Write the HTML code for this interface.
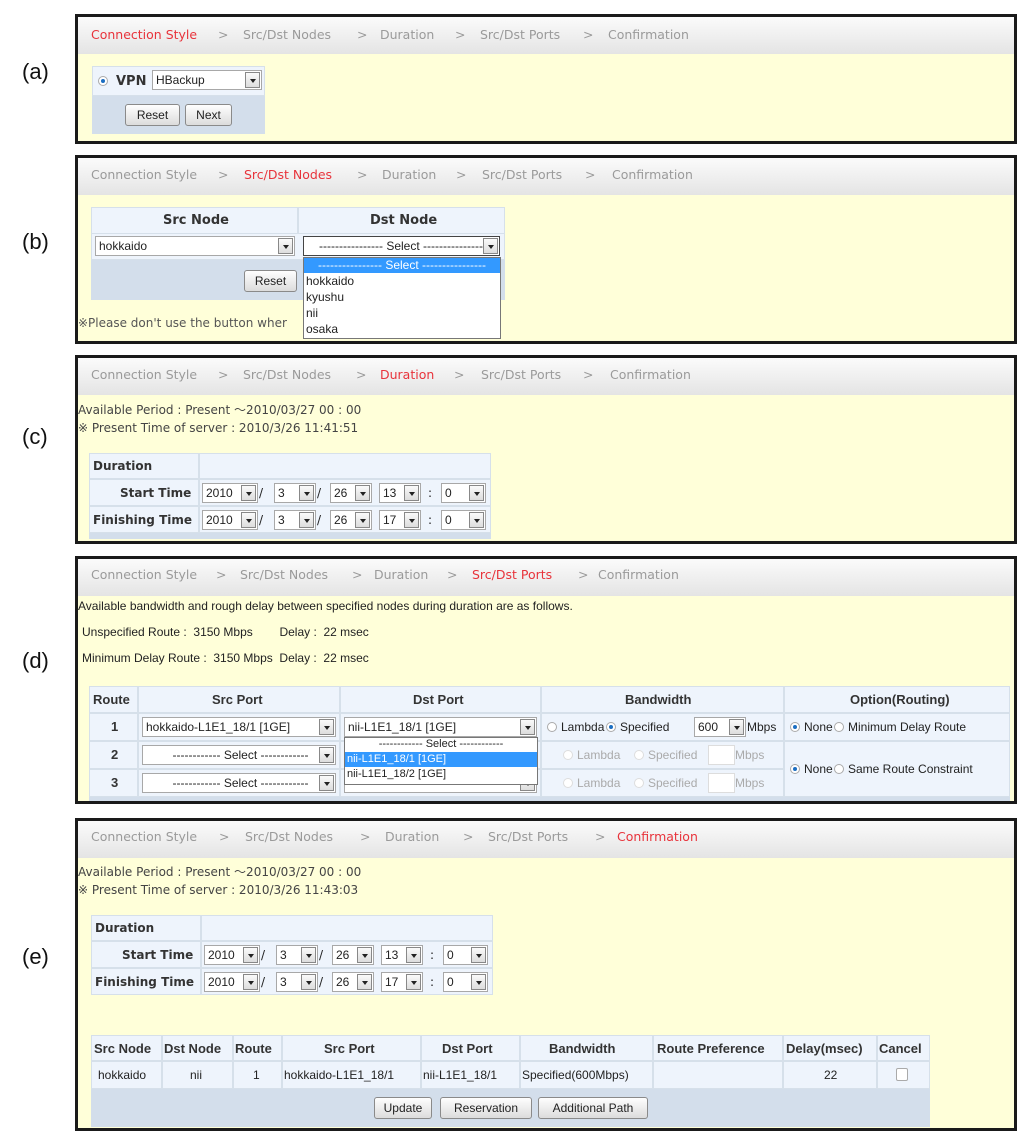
<!DOCTYPE html><html><head><meta charset="utf-8"><style>
*{margin:0;padding:0;box-sizing:border-box}
body{width:1024px;height:1137px;background:#fff;position:relative;font-family:"DejaVu Sans",Verdana,sans-serif;font-size:12px;color:#222;overflow:hidden}
div,span{position:absolute;white-space:nowrap}
.p{border:3px solid #1a1a1a;background:#ffffd9}
.hd{left:0;right:0;top:0;height:37px;background:linear-gradient(#fbfbfb,#e4e4e4)}
.h{color:#9a9a9a;font-size:12.5px}
.r{color:#e8333b}
.lab{font-family:"Liberation Sans",Arial,sans-serif;font-size:22px;color:#111}
.c{background:#eef4fc;border:1px solid #d6e0ea}
.b{background:#d3deeb}
.s{background:#fff;border:1px solid #a8a8a8;height:20px;line-height:18px;padding-left:3px;font-family:"Liberation Sans",Arial,sans-serif;font-size:12px}
.s i{position:absolute;right:1px;top:1px;width:15px;height:16px;border:1px solid #888;background:linear-gradient(#fafafa,#ddd)}
.s i:after{content:"";position:absolute;left:4px;top:6px;border:3px solid transparent;border-top:4px solid #222}
.bt{border:1px solid #8a8a8a;border-radius:3px;background:linear-gradient(#fefefe,#dcdcdc);text-align:center;font-family:"Liberation Sans",Arial,sans-serif;font-size:12px;line-height:20px;height:22px}
.rd{width:10px;height:10px;border-radius:50%;border:1px solid #aaa;background:#fff}
.rd.on:after{content:"";position:absolute;left:2px;top:2px;width:4px;height:4px;border-radius:50%;background:#1b6ec2}
.n{font-family:"Liberation Sans",Arial,sans-serif;font-size:12px}
.bd{font-weight:bold;color:#333}
.g{color:#aaa}
.hl{background:#3399ff;color:#fff}
</style></head><body>
<div class="lab" style="left:22px;top:59px">(a)</div>
<div class="lab" style="left:22px;top:229px">(b)</div>
<div class="lab" style="left:22px;top:424px">(c)</div>
<div class="lab" style="left:22px;top:648px">(d)</div>
<div class="lab" style="left:22px;top:944px">(e)</div>

<!-- a -->
<div class="p" style="left:75px;top:14px;width:942px;height:130px"><div class="hd"></div></div>
<span class="h r" style="left:91px;top:27px">Connection Style</span><span class="h" style="left:218px;top:27px">&gt;</span><span class="h" style="left:243px;top:27px">Src/Dst Nodes</span><span class="h" style="left:357px;top:27px">&gt;</span><span class="h" style="left:380px;top:27px">Duration</span><span class="h" style="left:455px;top:27px">&gt;</span><span class="h" style="left:480px;top:27px">Src/Dst Ports</span><span class="h" style="left:583px;top:27px">&gt;</span><span class="h" style="left:608px;top:27px">Confirmation</span>
<div class="c" style="left:92px;top:66px;width:173px;height:30px"></div>
<div class="b" style="left:92px;top:96px;width:173px;height:38px"></div>
<div class="rd on" style="left:98px;top:76px"></div>
<span class="bd" style="left:116px;top:74px;font-size:13px">VPN</span>
<div class="s" style="left:152px;top:70px;width:110px">HBackup<i></i></div>
<div class="bt" style="left:125px;top:104px;width:55px">Reset</div>
<div class="bt" style="left:185px;top:104px;width:47px">Next</div>

<!-- b -->
<div class="p" style="left:75px;top:155px;width:942px;height:189px"><div class="hd"></div></div>
<span class="h" style="left:91px;top:167px">Connection Style</span><span class="h" style="left:218px;top:167px">&gt;</span><span class="h r" style="left:244px;top:167px">Src/Dst Nodes</span><span class="h" style="left:357px;top:167px">&gt;</span><span class="h" style="left:382px;top:167px">Duration</span><span class="h" style="left:456px;top:167px">&gt;</span><span class="h" style="left:482px;top:167px">Src/Dst Ports</span><span class="h" style="left:585px;top:167px">&gt;</span><span class="h" style="left:612px;top:167px">Confirmation</span>
<div class="c" style="left:91px;top:207px;width:207px;height:27px"></div>
<div class="c" style="left:298px;top:207px;width:207px;height:27px"></div>
<div class="c" style="left:91px;top:233px;width:414px;height:27px"></div>
<div class="b" style="left:91px;top:260px;width:414px;height:40px"></div>
<span class="bd" style="left:163px;top:213px;font-size:13px">Src Node</span>
<span class="bd" style="left:370px;top:213px;font-size:13px">Dst Node</span>
<div class="s" style="left:95px;top:236px;width:200px">hokkaido<i></i></div>
<div class="s" style="left:303px;top:236px;width:197px;text-align:center;border-color:#444">---------------- Select ----------------<i></i></div>
<div class="bt" style="left:244px;top:270px;width:53px">Reset</div>
<span style="left:78px;top:316px;color:#555">※Please don't use the button wher</span>
<div style="left:303px;top:257px;width:198px;height:82px;background:#fff;border:1px solid #777"></div>
<div class="n hl" style="left:304px;top:258px;width:196px;height:15px;line-height:15px;text-align:center">---------------- Select ----------------</div>
<span class="n" style="left:306px;top:274px">hokkaido</span>
<span class="n" style="left:306px;top:290px">kyushu</span>
<span class="n" style="left:306px;top:306px">nii</span>
<span class="n" style="left:306px;top:322px">osaka</span>

<!-- c -->
<div class="p" style="left:75px;top:355px;width:942px;height:189px"><div class="hd"></div></div>
<span class="h" style="left:91px;top:367px">Connection Style</span><span class="h" style="left:218px;top:367px">&gt;</span><span class="h" style="left:243px;top:367px">Src/Dst Nodes</span><span class="h" style="left:356px;top:367px">&gt;</span><span class="h r" style="left:380px;top:367px">Duration</span><span class="h" style="left:454px;top:367px">&gt;</span><span class="h" style="left:481px;top:367px">Src/Dst Ports</span><span class="h" style="left:583px;top:367px">&gt;</span><span class="h" style="left:610px;top:367px">Confirmation</span>
<span style="left:78px;top:401px;color:#444">Available Period : Present ～2010/03/27 00 : 00</span>
<span style="left:78px;top:421px;color:#444">※ Present Time of server : 2010/3/26 11:41:51</span>

<!-- e -->
<div class="p" style="left:75px;top:818px;width:942px;height:313px"><div class="hd"></div></div>
<span class="h" style="left:91px;top:829px">Connection Style</span><span class="h" style="left:219px;top:829px">&gt;</span><span class="h" style="left:245px;top:829px">Src/Dst Nodes</span><span class="h" style="left:360px;top:829px">&gt;</span><span class="h" style="left:385px;top:829px">Duration</span><span class="h" style="left:463px;top:829px">&gt;</span><span class="h" style="left:488px;top:829px">Src/Dst Ports</span><span class="h" style="left:595px;top:829px">&gt;</span><span class="h r" style="left:617px;top:829px">Confirmation</span>
<span style="left:78px;top:863px;color:#444">Available Period : Present ～2010/03/27 00 : 00</span>
<span style="left:78px;top:883px;color:#444">※ Present Time of server : 2010/3/26 11:43:03</span>

<!-- duration tables c and e -->
<div id="dc" style="left:89px;top:453px;width:402px;height:86px">
 <div class="c" style="left:0;top:0;width:110px;height:26px"></div><div class="c" style="left:110px;top:0;width:292px;height:26px"></div>
 <div class="c" style="left:0;top:26px;width:110px;height:27px"></div><div class="c" style="left:110px;top:26px;width:292px;height:27px"></div>
 <div class="c" style="left:0;top:53px;width:110px;height:27px"></div><div class="c" style="left:110px;top:53px;width:292px;height:27px"></div>
 <div class="b" style="left:0;top:80px;width:402px;height:6px"></div>
 <span class="bd" style="left:4px;top:6px">Duration</span>
 <span class="bd" style="left:31px;top:33px">Start Time</span>
 <span class="bd" style="left:4px;top:60px">Finishing Time</span>
 <div class="s" style="left:113px;top:30px;width:56px">2010<i></i></div><span style="left:170px;top:33px">/</span>
 <div class="s" style="left:185px;top:30px;width:42px">3<i></i></div><span style="left:228px;top:33px">/</span>
 <div class="s" style="left:241px;top:30px;width:42px">26<i></i></div>
 <div class="s" style="left:290px;top:30px;width:42px">13<i></i></div><span style="left:339px;top:33px">:</span>
 <div class="s" style="left:352px;top:30px;width:45px">0<i></i></div>
 <div class="s" style="left:113px;top:57px;width:56px">2010<i></i></div><span style="left:170px;top:60px">/</span>
 <div class="s" style="left:185px;top:57px;width:42px">3<i></i></div><span style="left:228px;top:60px">/</span>
 <div class="s" style="left:241px;top:57px;width:42px">26<i></i></div>
 <div class="s" style="left:290px;top:57px;width:42px">17<i></i></div><span style="left:339px;top:60px">:</span>
 <div class="s" style="left:352px;top:57px;width:45px">0<i></i></div>
</div>
<div style="left:91px;top:915px;width:402px;height:86px">
 <div class="c" style="left:0;top:0;width:110px;height:26px"></div><div class="c" style="left:110px;top:0;width:292px;height:26px"></div>
 <div class="c" style="left:0;top:26px;width:110px;height:27px"></div><div class="c" style="left:110px;top:26px;width:292px;height:27px"></div>
 <div class="c" style="left:0;top:53px;width:110px;height:27px"></div><div class="c" style="left:110px;top:53px;width:292px;height:27px"></div>
 <span class="bd" style="left:4px;top:6px">Duration</span>
 <span class="bd" style="left:31px;top:33px">Start Time</span>
 <span class="bd" style="left:4px;top:60px">Finishing Time</span>
 <div class="s" style="left:113px;top:30px;width:56px">2010<i></i></div><span style="left:170px;top:33px">/</span>
 <div class="s" style="left:185px;top:30px;width:42px">3<i></i></div><span style="left:228px;top:33px">/</span>
 <div class="s" style="left:241px;top:30px;width:42px">26<i></i></div>
 <div class="s" style="left:290px;top:30px;width:42px">13<i></i></div><span style="left:339px;top:33px">:</span>
 <div class="s" style="left:352px;top:30px;width:45px">0<i></i></div>
 <div class="s" style="left:113px;top:57px;width:56px">2010<i></i></div><span style="left:170px;top:60px">/</span>
 <div class="s" style="left:185px;top:57px;width:42px">3<i></i></div><span style="left:228px;top:60px">/</span>
 <div class="s" style="left:241px;top:57px;width:42px">26<i></i></div>
 <div class="s" style="left:290px;top:57px;width:42px">17<i></i></div><span style="left:339px;top:60px">:</span>
 <div class="s" style="left:352px;top:57px;width:45px">0<i></i></div>
</div>

<!-- d -->
<div class="p" style="left:75px;top:556px;width:942px;height:248px"><div class="hd"></div></div>
<span class="h" style="left:91px;top:567px">Connection Style</span><span class="h" style="left:216px;top:567px">&gt;</span><span class="h" style="left:240px;top:567px">Src/Dst Nodes</span><span class="h" style="left:352px;top:567px">&gt;</span><span class="h" style="left:374px;top:567px">Duration</span><span class="h" style="left:447px;top:567px">&gt;</span><span class="h r" style="left:472px;top:567px">Src/Dst Ports</span><span class="h" style="left:578px;top:567px">&gt;</span><span class="h" style="left:598px;top:567px">Confirmation</span>
<span class="n" style="left:78px;top:599px">Available bandwidth and rough delay between specified nodes during duration are as follows.</span>
<span class="n" style="left:82px;top:625px">Unspecified Route :&nbsp; 3150 Mbps&nbsp;&nbsp;&nbsp;&nbsp;&nbsp;&nbsp;&nbsp; Delay :&nbsp; 22 msec</span>
<span class="n" style="left:82px;top:651px">Minimum Delay Route :&nbsp; 3150 Mbps&nbsp; Delay :&nbsp; 22 msec</span>
<div class="c" style="left:89px;top:686px;width:49px;height:27px"></div>
<div class="c" style="left:138px;top:686px;width:202px;height:27px"></div>
<div class="c" style="left:340px;top:686px;width:201px;height:27px"></div>
<div class="c" style="left:541px;top:686px;width:243px;height:27px"></div>
<div class="c" style="left:784px;top:686px;width:226px;height:27px"></div>
<div class="c" style="left:89px;top:713px;width:49px;height:28px"></div><div class="c" style="left:138px;top:713px;width:202px;height:28px"></div><div class="c" style="left:340px;top:713px;width:201px;height:28px"></div><div class="c" style="left:541px;top:713px;width:243px;height:28px"></div><div class="c" style="left:784px;top:713px;width:226px;height:28px"></div>
<div class="c" style="left:89px;top:741px;width:49px;height:28px"></div><div class="c" style="left:138px;top:741px;width:202px;height:28px"></div><div class="c" style="left:340px;top:741px;width:201px;height:28px"></div><div class="c" style="left:541px;top:741px;width:243px;height:28px"></div><div class="c" style="left:784px;top:741px;width:226px;height:56px"></div>
<div class="c" style="left:89px;top:769px;width:49px;height:28px"></div><div class="c" style="left:138px;top:769px;width:202px;height:28px"></div><div class="c" style="left:340px;top:769px;width:201px;height:28px"></div><div class="c" style="left:541px;top:769px;width:243px;height:28px"></div>
<div class="b" style="left:89px;top:797px;width:921px;height:4px"></div>
<span class="n bd" style="left:93px;top:692px;font-size:13px">Route</span>
<span class="n bd" style="left:212px;top:692px;font-size:13px">Src Port</span>
<span class="n bd" style="left:413px;top:692px;font-size:13px">Dst Port</span>
<span class="n bd" style="left:625px;top:692px;font-size:13px">Bandwidth</span>
<span class="n bd" style="left:850px;top:692px;font-size:13px">Option(Routing)</span>
<span class="n bd" style="left:111px;top:719px;font-size:13px">1</span>
<span class="n bd" style="left:111px;top:747px;font-size:13px">2</span>
<span class="n bd" style="left:111px;top:775px;font-size:13px">3</span>
<div class="s" style="left:142px;top:717px;width:194px">hokkaido-L1E1_18/1 [1GE]<i></i></div>
<div class="s" style="left:142px;top:745px;width:194px;text-align:center">------------ Select ------------<i></i></div>
<div class="s" style="left:142px;top:773px;width:194px;text-align:center">------------ Select ------------<i></i></div>
<div class="s" style="left:344px;top:717px;width:193px">nii-L1E1_18/1 [1GE]<i></i></div>
<div class="s" style="left:344px;top:773px;width:193px"><i></i></div>
<div style="left:344px;top:737px;width:194px;height:48px;background:#fff;border:1px solid #777"></div>
<div class="n" style="left:345px;top:738px;width:192px;text-align:center;font-size:11px">------------ Select ------------</div>
<div class="n hl" style="left:345px;top:752px;width:192px;height:15px;line-height:15px;padding-left:2px;font-size:11px">nii-L1E1_18/1 [1GE]</div>
<div class="n" style="left:347px;top:768px;font-size:11px">nii-L1E1_18/2 [1GE]</div>
<div class="rd" style="left:547px;top:722px"></div><span class="n" style="left:561px;top:720px">Lambda</span>
<div class="rd on" style="left:606px;top:722px"></div><span class="n" style="left:620px;top:720px">Specified</span>
<div class="s" style="left:694px;top:717px;width:52px">600<i></i></div><span class="n" style="left:747px;top:720px">Mbps</span>
<div class="rd g" style="left:563px;top:750px;border-color:#ddd"></div><span class="n g" style="left:577px;top:748px">Lambda</span>
<div class="rd" style="left:634px;top:750px;border-color:#ddd"></div><span class="n g" style="left:648px;top:748px">Specified</span>
<div class="s" style="left:708px;top:745px;width:27px;border-color:#ddd"></div><span class="n g" style="left:735px;top:748px">Mbps</span>
<div class="rd" style="left:563px;top:778px;border-color:#ddd"></div><span class="n g" style="left:577px;top:776px">Lambda</span>
<div class="rd" style="left:634px;top:778px;border-color:#ddd"></div><span class="n g" style="left:648px;top:776px">Specified</span>
<div class="s" style="left:708px;top:773px;width:27px;border-color:#ddd"></div><span class="n g" style="left:735px;top:776px">Mbps</span>
<div class="rd on" style="left:790px;top:722px"></div><span class="n" style="left:804px;top:720px">None</span>
<div class="rd" style="left:834px;top:722px"></div><span class="n" style="left:848px;top:720px">Minimum Delay Route</span>
<div class="rd on" style="left:790px;top:764px"></div><span class="n" style="left:804px;top:762px">None</span>
<div class="rd" style="left:834px;top:764px"></div><span class="n" style="left:848px;top:762px">Same Route Constraint</span>

<!-- e bottom table -->
<div class="c" style="left:91px;top:1035px;width:71px;height:26px"></div><div class="c" style="left:162px;top:1035px;width:71px;height:26px"></div><div class="c" style="left:233px;top:1035px;width:49px;height:26px"></div><div class="c" style="left:282px;top:1035px;width:139px;height:26px"></div><div class="c" style="left:421px;top:1035px;width:99px;height:26px"></div><div class="c" style="left:520px;top:1035px;width:133px;height:26px"></div><div class="c" style="left:653px;top:1035px;width:130px;height:26px"></div><div class="c" style="left:783px;top:1035px;width:94px;height:26px"></div><div class="c" style="left:877px;top:1035px;width:53px;height:26px"></div>
<div class="c" style="left:91px;top:1061px;width:71px;height:28px"></div><div class="c" style="left:162px;top:1061px;width:71px;height:28px"></div><div class="c" style="left:233px;top:1061px;width:49px;height:28px"></div><div class="c" style="left:282px;top:1061px;width:139px;height:28px"></div><div class="c" style="left:421px;top:1061px;width:99px;height:28px"></div><div class="c" style="left:520px;top:1061px;width:133px;height:28px"></div><div class="c" style="left:653px;top:1061px;width:130px;height:28px"></div><div class="c" style="left:783px;top:1061px;width:94px;height:28px"></div><div class="c" style="left:877px;top:1061px;width:53px;height:28px"></div>
<div class="b" style="left:91px;top:1089px;width:839px;height:38px"></div>
<span class="n bd" style="left:94px;top:1041px;font-size:13px">Src Node</span>
<span class="n bd" style="left:164px;top:1041px;font-size:13px">Dst Node</span>
<span class="n bd" style="left:235px;top:1041px;font-size:13px">Route</span>
<span class="n bd" style="left:324px;top:1041px;font-size:13px">Src Port</span>
<span class="n bd" style="left:442px;top:1041px;font-size:13px">Dst Port</span>
<span class="n bd" style="left:549px;top:1041px;font-size:13px">Bandwidth</span>
<span class="n bd" style="left:657px;top:1041px;font-size:13px">Route Preference</span>
<span class="n bd" style="left:786px;top:1041px;font-size:13px">Delay(msec)</span>
<span class="n bd" style="left:879px;top:1041px;font-size:13px">Cancel</span>
<span class="n" style="left:98px;top:1068px">hokkaido</span>
<span class="n" style="left:190px;top:1068px">nii</span>
<span class="n" style="left:253px;top:1068px">1</span>
<span class="n" style="left:284px;top:1068px">hokkaido-L1E1_18/1</span>
<span class="n" style="left:423px;top:1068px">nii-L1E1_18/1</span>
<span class="n" style="left:522px;top:1068px">Specified(600Mbps)</span>
<span class="n" style="left:824px;top:1068px">22</span>
<div style="left:896px;top:1068px;width:12px;height:13px;border:1px solid #aaa;background:#fff;border-radius:2px"></div>
<div class="bt" style="left:374px;top:1097px;width:58px">Update</div>
<div class="bt" style="left:440px;top:1097px;width:92px">Reservation</div>
<div class="bt" style="left:538px;top:1097px;width:110px">Additional Path</div>
</body></html>
